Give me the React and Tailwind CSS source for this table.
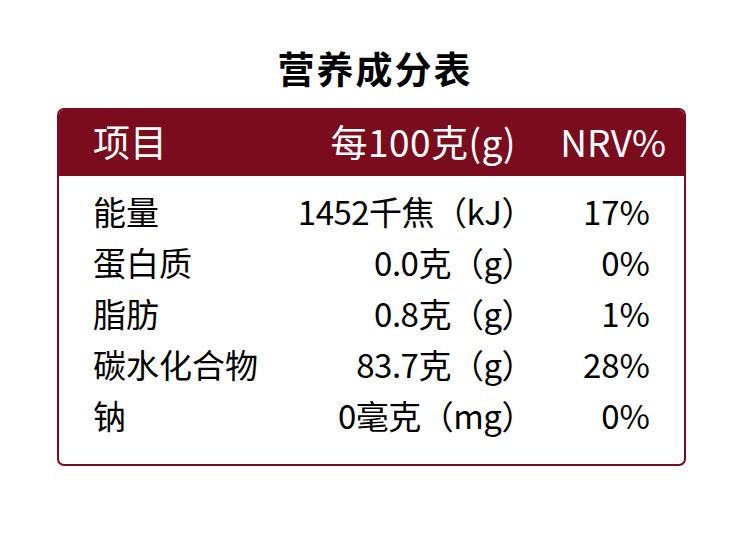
export default function App() {
  const rows = [
    ["能量", "1452千焦（kJ）", "17%"],
    ["蛋白质", "0.0克（g）", "0%"],
    ["脂肪", "0.8克（g）", "1%"],
    ["碳水化合物", "83.7克（g）", "28%"],
    ["钠", "0毫克（mg）", "0%"],
  ];
  return (
    <div
      className="w-[750px] h-[543px] bg-white flex flex-col items-center"
      style={{ fontFamily: '"Noto Sans CJK SC", "Noto Sans", sans-serif' }}
    >
      <h1 className="mt-[43px] text-[37px] leading-[50px] font-bold text-black tracking-[2px]">
        营养成分表
      </h1>
      <div className="mt-[15px] ml-[-7px] w-[629px] h-[358px] border-2 border-[#7b0c1e] rounded-[7px] overflow-hidden flex flex-col">
        <div className="h-[66px] bg-[#7b0c1e] text-white flex items-center text-[37px] leading-none pl-[34px] pr-[18px] pb-[4px]">
          <div className="flex-1">项目</div>
          <div className="tracking-[0.5px]">每100克(g)</div>
          <div className="w-[150px] text-right">NRV%</div>
        </div>
        <div className="flex flex-col pt-[10px] text-black text-[33px] leading-[51px]">
          {rows.map(([a, b, c]) => (
            <div key={a} className="flex pl-[34px] pr-[34px]">
              <div className="flex-1">{a}</div>
              <div className="text-right tracking-[-0.5px]">{b}</div>
              <div className="w-[116px] text-right">{c}</div>
            </div>
          ))}
        </div>
      </div>
    </div>
  );
}
